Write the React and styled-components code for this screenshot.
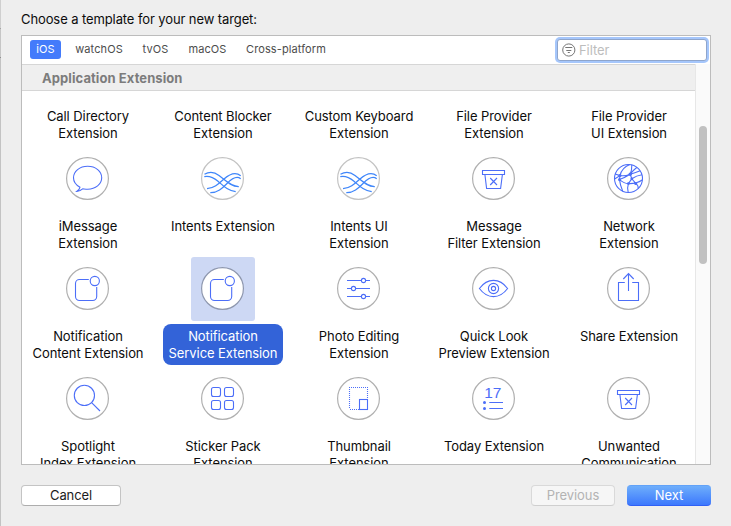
import React from "react";
import styled, { createGlobalStyle } from "styled-components";

const GlobalStyle = createGlobalStyle`
  * { box-sizing: border-box; }
  body {
    margin: 0;
    background: #eeeeee;
    color: #0c0c0c;
    font-family: Inter, "Liberation Sans", sans-serif;
    font-size: 13px;
    line-height: 17px;
    letter-spacing: -0.08px;
  }
`;

const Sheet = styled.main`
  display: flex;
  flex-direction: column;
  width: 731px;
  height: 526px;
  padding: 11px 20px 0 21px;
  background: linear-gradient(
      #cfcfcf 28px,
      #a4a4a4 28px 29px,
      #c6c6c6 29px 57px,
      #8f8f8f 57px 58px,
      #c3c3c3 58px
    )
    0 0 / 1px 100% no-repeat;
  overflow: hidden;
`;

const Title = styled.h1`
  margin: 0 0 7px;
  font-size: 13px;
  font-weight: 400;
  line-height: 17px;
  letter-spacing: -0.1px;
`;

const Panel = styled.section`
  display: flex;
  flex-direction: column;
  width: 690px;
  height: 430px;
  background: #fff;
  border: 1px solid #bcbcbc;
`;

const TabBar = styled.nav`
  display: flex;
  align-items: flex-start;
  height: 28px;
  padding: 1px 1px 0 8px;
`;

const Tab = styled.button`
  height: 19px;
  margin: 3px ${(p) => p.$gap}px 0 0;
  padding: 0;
  width: ${(p) => p.$width}px;
  border: 0;
  border-radius: 3px;
  background: ${(p) => (p.$active ? "#437bfb" : "transparent")};
  color: ${(p) => (p.$active ? "#fff" : "#4c4c4c")};
  font: 400 11px/19px Inter, "Liberation Sans", sans-serif;
  letter-spacing: 0.1px;
  white-space: nowrap;
`;

const Filter = styled.label`
  display: flex;
  align-items: center;
  gap: 3px;
  width: 150px;
  height: 22px;
  margin: 2px 2px 0 auto;
  padding-left: 4px;
  background: #fff;
  border: 1px solid #8fa5cb;
  border-radius: 3px;
  box-shadow: 0 0 0 2px #a5c6fb;
  color: #bdbdbd;
`;

const Scroller = styled.div`
  display: flex;
  flex: 1;
  min-height: 0;
`;

const Content = styled.div`
  display: flex;
  flex-direction: column;
  width: 673px;
`;

const SectionHeader = styled.h2`
  flex: none;
  height: 27px;
  margin: 0;
  padding-left: 20px;
  background: #efefef;
  border: solid #d6d6d6;
  border-width: 1px 0;
  color: #7c7c7c;
  font-size: 13px;
  font-weight: 700;
  line-height: 27px;
  letter-spacing: 0.08px;
`;

const Viewport = styled.div`
  flex: 1;
  min-height: 0;
  overflow: hidden;
`;

const Grid = styled.div`
  display: grid;
  grid-template-columns: 132px 132px 134px 130px 134px;
  column-gap: 3px;
  grid-auto-rows: 110px;
  margin-top: -54px;
`;

const Cell = styled.div`
  display: flex;
  flex-direction: column;
  align-items: center;
  gap: 3px;
`;

const IconBox = styled.div`
  flex: none;
  width: 64px;
  height: 64px;
  border-radius: 3px;
  background: ${(p) => (p.$selected ? "#cdd8f4" : "transparent")};
`;

const Label = styled.div`
  padding: 4px 5.5px 3px;
  border-radius: 8px;
  background: ${(p) => (p.$selected ? "#3363d8" : "transparent")};
  color: ${(p) => (p.$selected ? "#fff" : "inherit")};
  text-align: center;
  white-space: pre;
`;

const Track = styled.div`
  width: 15px;
  padding: 62px 3px 0;
  background: #fafafa;
  border-left: 1px solid #e7e7e7;
`;

const Thumb = styled.div`
  width: 8px;
  height: 138px;
  border-radius: 4px;
  background: #c1c1c1;
`;

const Footer = styled.footer`
  display: flex;
  width: 690px;
  margin-top: 20px;
`;

const Button = styled.button`
  width: ${(p) => p.$width}px;
  height: 21px;
  padding: 0;
  border: 1px solid #c4c4c4;
  border-bottom-color: #adadad;
  border-radius: 4px;
  background: #fff;
  color: #1c1c1c;
  font: 400 13px/19px Inter, "Liberation Sans", sans-serif;
  letter-spacing: -0.1px;
  &:disabled {
    margin-left: auto;
    background: #f6f6f6;
    border-color: #d9d9d9;
    border-bottom-color: #cfcfcf;
    color: #b3b3b3;
  }
`;

const PrimaryButton = styled(Button)`
  margin-left: 12px;
  border: solid;
  border-width: 1px 0;
  border-color: #62a2f8 #2f60f5 #2f60f5;
  background: linear-gradient(#6eaefb, #3c78fd);
  color: #fff;
`;

const Glyph = styled.svg`
  display: block;
  fill: none;
  stroke: ${(p) => p.$color || "#4c6ef8"};
  stroke-width: ${(p) => p.$weight || 1.1};
`;

const TodayNumber = styled.text`
  fill: #4c6ef8;
  stroke: none;
  font: 400 15.5px "Liberation Sans", sans-serif;
  letter-spacing: -0.2px;
`;

const Waves = () => (
  <g strokeWidth="1.25">
    <path d="M13.5 27.3C18 24.6 23 24.6 28 28.5C34 33 40 39.8 47.8 39.6" />
    <path d="M13.3 29.6C18 28.6 22 30 27 34.2C32.5 39 37 43.8 44.7 44.6" />
    <path d="M16 41.6C23 41.4 28 36.5 33 32C39 26.7 44.5 24.5 49.7 28.8" />
    <path d="M19.3 45.6C27 45.8 31.5 41 36 36.5C41 31.4 45.5 28.3 49.7 31.8" />
  </g>
);

const Bin = () => (
  <>
    <path d="M20.5 23.5h22v4h-22zM22.9 27.5L24.6 41.5H38.6L40.4 27.5" />
    <path d="M28.2 31l6.8 7M35 31l-6.8 7" />
  </>
);

const Network = () => (
  <>
    <circle cx="31.5" cy="31.5" r="14" />
    <path d="M18.2 27L23 28.6Q28 29.2 33.2 27.2Q39 25.5 43.2 23.7M22.5 32.6Q27.5 36.7 31.4 36.6Q39 37 45.2 33M17.5 32L23 28.6Q25 20.5 33 17.6M34.8 17.8Q35 23 33.2 27.2Q27 31 22.5 32.6Q23 37.5 25.7 44.2M23 28.6L22.5 32.6M33.2 27.2L34.8 31.8L38.7 36.4Q41.5 38.5 41.2 41.5M33.2 27.2Q36.5 23 40 20.3M34.8 31.8Q39.5 28.5 45 27.8M34.8 31.8L31.4 36.6Q30 40.5 31.2 45.4" />
    <g fill="#4c6ef8" stroke="none">
      <circle cx="23" cy="28.5" r="1.5" />
      <circle cx="22.4" cy="32.7" r="1.4" />
      <circle cx="33.2" cy="27.2" r="1.7" />
      <circle cx="34.8" cy="31.8" r="1.4" />
      <circle cx="31.4" cy="36.6" r="1.4" />
      <circle cx="38.7" cy="36.4" r="1.5" />
    </g>
  </>
);

const Notification = () => (
  <>
    <path d="M32.8 22.5H23.5a4 4 0 0 0-4 4v13a4 4 0 0 0 4 4h13.2a4 4 0 0 0 4-4V30" />
    <circle cx="38.8" cy="24" r="4.6" />
  </>
);

const drawings = {
  message: (
    <path d="M24 40.3C19.8 38 17.5 34.8 17.5 30.8C17.5 24.3 23.7 19.3 31.7 19.3S45.7 24.3 45.7 30.8S39.5 42.2 31.7 42.2C29.7 42.2 28.2 42 26.7 41.9C25 43.3 23 44.6 20.7 44.5C22.8 43 23.8 42 24 40.3Z" />
  ),
  waves: <Waves />,
  bin: <Bin />,
  network: <Network />,
  notification: <Notification />,
  sliders: (
    <>
      <path d="M20 23.5h14.3M38.7 23.5H43M20 31.5h4.3M28.7 31.5H43M20 39.5h14.3M38.7 39.5H43" />
      <circle cx="36.5" cy="23.5" r="2.1" />
      <circle cx="26.5" cy="31.5" r="2.1" />
      <circle cx="36.5" cy="39.5" r="2.1" />
    </>
  ),
  eye: (
    <>
      <path d="M17.4 31.5C21.5 26 26 23.4 31.5 23.4S41.5 26 45.6 31.5C41.5 37 37 39.6 31.5 39.6S21.5 37 17.4 31.5Z" />
      <circle cx="31.5" cy="31.5" r="5.1" />
      <circle cx="31.5" cy="31.5" r="2.1" />
    </>
  ),
  share: (
    <path d="M27.8 25.5H21.5v18h20v-18h-6.3M31.5 34V16.7M26.3 22L31.5 16.6L36.7 22" />
  ),
  search: (
    <>
      <circle cx="28.4" cy="28.4" r="10.1" />
      <path d="M35.6 35.6L44 44" />
    </>
  ),
  squares: (
    <>
      <rect x="20.5" y="20.5" width="9" height="9" rx="2" />
      <rect x="33.5" y="20.5" width="9" height="9" rx="2" />
      <rect x="20.5" y="33.5" width="9" height="9" rx="2" />
      <rect x="33.5" y="33.5" width="9" height="9" rx="2" />
    </>
  ),
  thumbnail: (
    <>
      <path
        strokeDasharray="1 1"
        d="M22 20.5H41M22.5 22V42M40.5 22V32M23 42.5H32"
      />
      <rect x="32.5" y="32.5" width="8" height="10" />
    </>
  ),
  today: (
    <>
      <TodayNumber x="22.3" y="31">17</TodayNumber>
      <path d="M27.3 35.5H41M27.3 41.5H41" />
      <g fill="#4c6ef8" stroke="none">
        <circle cx="22.5" cy="35.5" r="1.5" />
        <circle cx="22.5" cy="41.5" r="1.5" />
      </g>
    </>
  ),
};

function TemplateIcon({ name, selected }) {
  const light = name === "waves";
  const ring = selected ? "#8e97ae" : light ? "#c3c3c3" : "#b0b0b0";
  return (
    <Glyph width="64" height="64" viewBox="0 0 64 64" $color={light ? "#3f86fa" : undefined}>
      <circle cx="31.5" cy="31.5" r="20.9" fill="#fff" stroke={ring} strokeWidth="1.2" />
      {drawings[name]}
    </Glyph>
  );
}

const templates = [
  [null, "Call Directory\nExtension"],
  [null, "Content Blocker\nExtension"],
  [null, "Custom Keyboard\nExtension"],
  [null, "File Provider\nExtension"],
  [null, "File Provider\nUI Extension"],
  ["message", "iMessage\nExtension"],
  ["waves", "Intents Extension"],
  ["waves", "Intents UI\nExtension"],
  ["bin", "Message\nFilter Extension"],
  ["network", "Network\nExtension"],
  ["notification", "Notification\nContent Extension"],
  ["notification", "Notification\nService Extension", true],
  ["sliders", "Photo Editing\nExtension"],
  ["eye", "Quick Look\nPreview Extension"],
  ["share", "Share Extension"],
  ["search", "Spotlight\nIndex Extension"],
  ["squares", "Sticker Pack\nExtension"],
  ["thumbnail", "Thumbnail\nExtension"],
  ["today", "Today Extension"],
  ["bin", "Unwanted\nCommunication"],
];

const tabs = [
  ["iOS", 31, 14, true],
  ["watchOS", 48, 19],
  ["tvOS", 27, 19],
  ["macOS", 39, 19],
  ["Cross-platform", 80, 0],
];

export default function App() {
  return (
    <>
      <GlobalStyle />
      <Sheet>
        <Title>Choose a template for your new target:</Title>
        <Panel>
          <TabBar>
            {tabs.map(([name, width, gap, active]) => (
              <Tab key={name} $width={width} $gap={gap} $active={active}>
                {name}
              </Tab>
            ))}
            <Filter>
              <Glyph width="14" height="14" viewBox="0 0 14 14" $color="#757575" $weight={1}>
                <circle cx="6.8" cy="7" r="6.1" />
                <path d="M3.3 4.5h7M4.3 7.5h5M5.8 9.5h2" />
              </Glyph>
              Filter
            </Filter>
          </TabBar>
          <Scroller>
            <Content>
              <SectionHeader>Application Extension</SectionHeader>
              <Viewport>
                <Grid>
                  {templates.map(([icon, text, selected]) => (
                    <Cell key={text}>
                      <IconBox $selected={selected}>
                        {icon && <TemplateIcon name={icon} selected={selected} />}
                      </IconBox>
                      <Label $selected={selected}>{text}</Label>
                    </Cell>
                  ))}
                </Grid>
              </Viewport>
            </Content>
            <Track>
              <Thumb />
            </Track>
          </Scroller>
        </Panel>
        <Footer>
          <Button $width={100}>Cancel</Button>
          <Button $width={84} disabled>
            Previous
          </Button>
          <PrimaryButton $width={84}>Next</PrimaryButton>
        </Footer>
      </Sheet>
    </>
  );
}
